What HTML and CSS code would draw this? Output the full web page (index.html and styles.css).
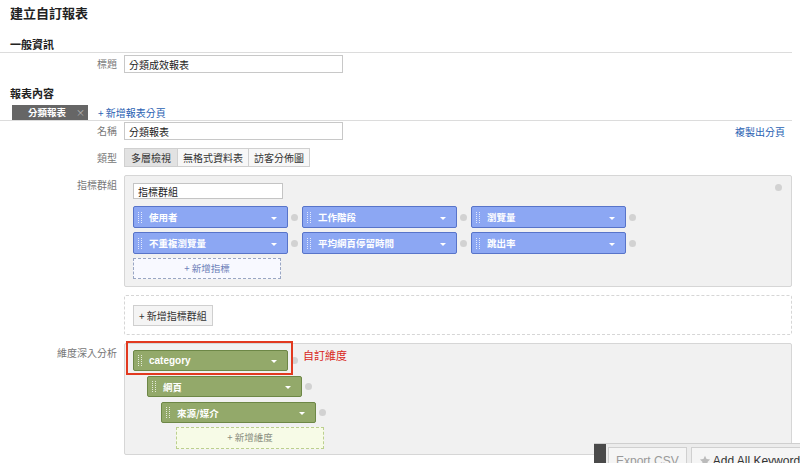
FILE: index.html
```html
<!DOCTYPE html>
<html lang="zh-TW">
<head>
    <meta charset="UTF-8">
    <title>建立自訂報表</title>
    <link rel="stylesheet" href="styles.css">
</head>
<body>
    <div class="page">
        <h1 class="page-title">建立自訂報表</h1>

        <h2 class="section-title ruled">一般資訊</h2>
        <div class="row row-center">
            <label class="row-label">標題</label>
            <div class="row-body">
                <input class="text-input" type="text" value="分類成效報表">
            </div>
        </div>

        <h2 class="section-title">報表內容</h2>
        <div class="tab-bar">
            <span class="tab">分類報表<span class="tab-x">×</span></span>
            <a class="link add-tab" href="#">+ 新增報表分頁</a>
        </div>

        <div class="row row-center">
            <label class="row-label">名稱</label>
            <div class="row-body">
                <input class="text-input" type="text" value="分類報表">
                <a class="link copy-link" href="#">複製出分頁</a>
            </div>
        </div>

        <div class="row row-center type-row">
            <label class="row-label">類型</label>
            <div class="row-body">
                <div class="btn-group">
                    <button class="seg active">多層檢視</button>
                    <button class="seg">無格式資料表</button>
                    <button class="seg">訪客分佈圖</button>
                </div>
            </div>
        </div>

        <div class="row group-row">
            <label class="row-label">指標群組</label>
            <div class="row-body">
                <div class="panel metric-panel">
                    <span class="remove panel-remove"></span>
                    <input class="group-input" type="text" value="指標群組">
                    <div class="chip-grid">
                        <div class="chip-cell"><div class="chip blue"><span class="grip"></span><span class="chip-text">使用者</span><span class="caret"></span></div><span class="remove"></span></div>
                        <div class="chip-cell"><div class="chip blue"><span class="grip"></span><span class="chip-text">工作階段</span><span class="caret"></span></div><span class="remove"></span></div>
                        <div class="chip-cell"><div class="chip blue"><span class="grip"></span><span class="chip-text">瀏覽量</span><span class="caret"></span></div><span class="remove"></span></div>
                        <div class="chip-cell"><div class="chip blue"><span class="grip"></span><span class="chip-text">不重複瀏覽量</span><span class="caret"></span></div><span class="remove"></span></div>
                        <div class="chip-cell"><div class="chip blue"><span class="grip"></span><span class="chip-text">平均網頁停留時間</span><span class="caret"></span></div><span class="remove"></span></div>
                        <div class="chip-cell"><div class="chip blue"><span class="grip"></span><span class="chip-text">跳出率</span><span class="caret"></span></div><span class="remove"></span></div>
                    </div>
                    <div class="add-box add-metric">+ 新增指標</div>
                </div>
            </div>
        </div>

        <div class="row group-row">
            <span class="row-label"></span>
            <div class="row-body">
                <div class="panel dashed-panel">
                    <button class="plain-btn">+ 新增指標群組</button>
                </div>
            </div>
        </div>

        <div class="row group-row">
            <label class="row-label">維度深入分析</label>
            <div class="row-body">
                <div class="panel dim-panel">
                    <div class="dim-list">
                        <div class="chip-cell"><div class="chip green"><span class="grip"></span><span class="chip-text latin">category</span><span class="caret"></span></div><span class="remove"></span></div>
                        <div class="chip-cell indent-1"><div class="chip green"><span class="grip"></span><span class="chip-text">網頁</span><span class="caret"></span></div><span class="remove"></span></div>
                        <div class="chip-cell indent-2"><div class="chip green"><span class="grip"></span><span class="chip-text">來源/媒介</span><span class="caret"></span></div><span class="remove"></span></div>
                        <div class="add-box add-dim">+ 新增維度</div>
                    </div>
                    <div class="highlight"></div>
                    <div class="highlight-note">自訂維度</div>
                </div>
            </div>
        </div>
    </div>

    <div class="float-bar">
        <span class="float-grip"></span>
        <button class="float-btn muted">Export CSV</button>
        <button class="float-btn keywords">
            <svg width="12" height="12" viewBox="0 0 14 14"><path d="M7 1l1.8 3.8 4.1.5-3 2.8.8 4.1L7 10.2 3.3 12.2l.8-4.1-3-2.8 4.1-.5z" fill="#bbb"/></svg>
            Add All Keywords
        </button>
    </div>
</body>
</html>
```

FILE: styles.css
```css
:root {
    --link: #2a62b3;
    --label: #777;
    --line: #dcdcdc;
    --blue-chip: #8ca7f3;
    --blue-edge: #5874c9;
    --green-chip: #93a96a;
    --green-edge: #6d8746;
}

body {
    margin: 0;
    font-family: "Noto Sans CJK TC", "Liberation Sans", sans-serif;
    color: #222;
    background: #fff;
    overflow: hidden;
    height: 463px;
    position: relative;
}

.page {
    width: 792px;
}

.page-title {
    margin: 5px 0 0 10px;
    font-size: 13px;
    line-height: 16px;
    font-weight: 700;
}

.section-title {
    margin: 13px 0 0;
    padding-left: 10px;
    font-size: 11px;
    line-height: 14px;
    font-weight: 700;
}

.section-title.ruled {
    margin-top: 16px;
    padding-bottom: 1px;
    border-bottom: 1px solid var(--line);
}

.row {
    display: flex;
    margin-top: 2px;
}

.row-center {
    align-items: center;
}

.row-label {
    width: 124px;
    flex: none;
    box-sizing: border-box;
    padding-right: 7px;
    text-align: right;
    font-size: 10px;
    line-height: 14px;
    color: var(--label);
}

.row-body {
    flex: 1;
    display: flex;
    align-items: center;
    position: relative;
}

.text-input {
    width: 219px;
    height: 18px;
    box-sizing: border-box;
    border: 1px solid #c8c8c8;
    padding: 0 4px;
    font: 10px "Noto Sans CJK TC", sans-serif;
    color: #222;
}

.link {
    color: var(--link);
    text-decoration: none;
    font-size: 10px;
}

.copy-link {
    margin-left: auto;
    margin-right: 7px;
}

.tab-bar {
    display: flex;
    align-items: flex-end;
    height: 15px;
    margin-top: 5px;
    border-bottom: 1px solid var(--line);
}

.tab {
    width: 76px;
    height: 15px;
    margin-left: 12px;
    box-sizing: border-box;
    padding-left: 16px;
    background: #666;
    color: #fff;
    font-size: 9.5px;
    line-height: 15px;
    font-weight: 700;
    white-space: nowrap;
}

.tab-x {
    margin-left: 10px;
    font-weight: 400;
    color: #bbb;
    font-size: 9px;
}

.add-tab {
    margin-left: 10px;
    line-height: 15px;
}

.tab-bar + .row {
    margin-top: 1px;
}

.type-row {
    margin-top: 8px;
}

.btn-group {
    display: flex;
}

.seg {
    height: 19px;
    padding: 0 5px;
    border: 1px solid #d0d0d0;
    margin-right: -1px;
    background: #f7f7f7;
    font: 10px "Noto Sans CJK TC", sans-serif;
    color: #333;
}

.seg.active {
    background: #e2e2e2;
    padding: 0 6px;
}

.group-row {
    margin-top: 8px;
}

.group-row .row-label {
    padding-top: 3px;
}

.group-row .row-body {
    align-items: stretch;
}

.panel {
    flex: 1;
    position: relative;
    box-sizing: border-box;
    border: 1px solid #d6d6d6;
    background: #f1f1f1;
    border-radius: 2px;
}

.metric-panel {
    padding: 7px 8px;
}

.group-input {
    display: block;
    width: 150px;
    height: 16px;
    box-sizing: border-box;
    border: 1px solid #c4c4c4;
    padding: 0 4px;
    font: 10px "Noto Sans CJK TC", sans-serif;
    color: #222;
}

.chip-grid {
    display: grid;
    grid-template-columns: repeat(3, 169px);
    row-gap: 4px;
    margin-top: 7px;
}

.chip-cell {
    display: flex;
    align-items: center;
}

.chip {
    width: 155px;
    height: 22px;
    box-sizing: border-box;
    border: 1px solid;
    border-radius: 2px;
    display: flex;
    align-items: center;
    color: #fff;
    font-size: 9.5px;
    font-weight: 700;
}

.chip.blue {
    background: var(--blue-chip);
    border-color: var(--blue-edge);
}

.chip.green {
    height: 21px;
    background: var(--green-chip);
    border-color: var(--green-edge);
}

.grip {
    width: 2px;
    height: 11px;
    margin: 0 7px 0 4px;
    border-left: 1px dotted rgba(255, 255, 255, 0.75);
    border-right: 1px dotted rgba(255, 255, 255, 0.75);
}

.chip-text {
    flex: 1;
}

.chip-text.latin {
    font-family: "Liberation Sans", sans-serif;
    font-size: 10px;
}

.caret {
    width: 0;
    height: 0;
    margin-right: 10px;
    margin-top: 2px;
    border-left: 3px solid transparent;
    border-right: 3px solid transparent;
    border-top: 3px solid #fff;
}

.remove {
    width: 7px;
    height: 7px;
    margin-left: 3px;
    border-radius: 50%;
    background: #d2d2d2;
}

.panel-remove {
    position: absolute;
    right: 9px;
    top: 8px;
}

.add-box {
    box-sizing: border-box;
    width: 148px;
    height: 21px;
    border: 1px dashed;
    text-align: center;
    font-size: 9.5px;
    line-height: 19px;
}

.add-metric {
    margin-top: 4px;
    border-color: #9aa7c4;
    background: #f8f9ff;
    color: #6d80b8;
}

.dashed-panel {
    display: flex;
    align-items: flex-start;
    background: #fff;
    border: 1px dashed #d6d6d6;
    padding: 9px 8px 8px;
}

.plain-btn {
    height: 21px;
    padding: 0 5px;
    border: 1px solid #cfcfcf;
    background: #f4f4f4;
    font: 10px "Noto Sans CJK TC", sans-serif;
    color: #333;
}

.dim-panel {
    padding: 6px 8px 5px;
}

.dim-list {
    display: flex;
    flex-direction: column;
    gap: 5px;
}

.indent-1 { margin-left: 14px; }
.indent-2 { margin-left: 28px; }

.add-dim {
    margin-left: 43px;
    margin-top: -1px;
    height: 22px;
    border-color: #bcd08e;
    background: #f7fbe7;
    color: #8a8f80;
}

.highlight {
    position: absolute;
    left: 1px;
    top: -3px;
    width: 167px;
    height: 34px;
    box-sizing: border-box;
    border: 2px solid #e2391f;
}

.highlight-note {
    position: absolute;
    left: 178px;
    top: 4px;
    font-size: 11px;
    line-height: 15px;
    color: #d9261b;
}

.float-bar {
    position: absolute;
    left: 594px;
    top: 443px;
    right: 0;
    height: 20px;
    display: flex;
    align-items: flex-start;
    background: #ececec;
    border-top: 1px solid #cfcfcf;
}

.float-grip {
    flex: none;
    width: 12px;
    height: 20px;
    background: #4a4a4a;
}

.float-btn {
    flex: none;
    height: 24px;
    margin: 3px 0 0 2px;
    padding: 6px 7px 0;
    display: flex;
    align-items: flex-start;
    gap: 2px;
    border: 1px solid #d0d0d0;
    background: #f5f5f5;
    font: 12px/14px "Liberation Sans", sans-serif;
    color: #333;
    white-space: nowrap;
}

.float-btn.muted {
    color: #999;
}

.float-btn.keywords {
    margin-left: 4px;
    padding-left: 7px;
}

.float-btn svg {
    margin-top: 1px;
}
```
